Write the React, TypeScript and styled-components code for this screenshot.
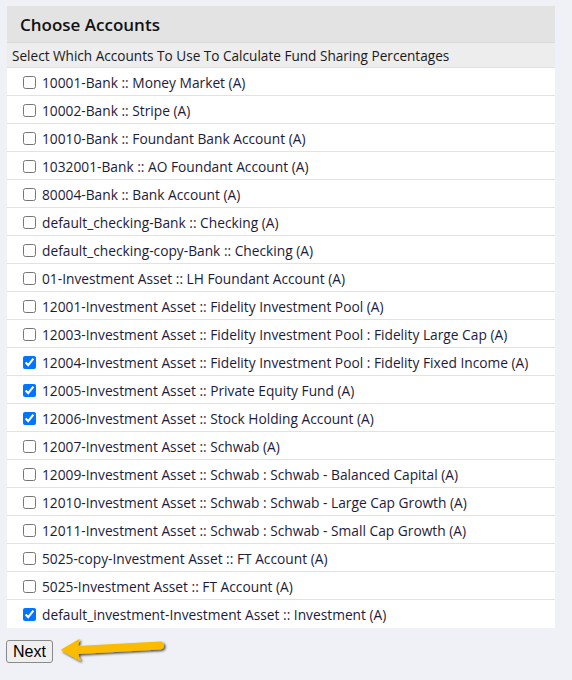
import * as React from 'react';
import styled, { createGlobalStyle } from 'styled-components';

const GlobalStyle = createGlobalStyle`
  body {
    margin: 0;
    background: #f0f1f6;
    font-family: "Open Sans", "Noto Sans", sans-serif;
    color: #1d1b3b;
  }
`;

const Page = styled.div`
  padding: 6px 17px 0 7px;
`;

const Panel = styled.div`
  width: 548px;
  background: #fff;
`;

const Header = styled.div`
  height: 36px;
  background: #e3e3e3;
  display: flex;
  align-items: center;
  padding-left: 13px;
  font-size: 17px;
  font-weight: 600;
  color: #111;
  border-bottom: 1px solid #d9d9d9;
`;

const SubHeader = styled.div`
  height: 24px;
  background: #ededed;
  display: flex;
  align-items: center;
  padding-left: 5px;
  font-size: 13.6px;
  color: #1a1a1a;
  border-bottom: 1px solid #e0e0e0;
`;

const Row = styled.label`
  box-sizing: border-box;
  height: 28px;
  padding-top: 1px;
  display: flex;
  align-items: center;
  padding-left: 13px;
  font-size: 13.75px;
  border-bottom: 1px solid #e2e2e2;
  &:last-child {
    border-bottom: none;
  }
`;

const Box = styled.input`
  width: 13px;
  height: 13px;
  margin: 0 6px 0 3px;
  accent-color: #0075ff;
`;

const Footer = styled.div`
  display: flex;
  align-items: flex-start;
  padding: 12px 0 0 0;
  margin-left: -1px;
`;

const NextButton = styled.button`
  font-family: "Liberation Sans", Arial, sans-serif;
  font-size: 16px;
  color: #000;
  background: #efefef;
  border: 1px solid #8a8a8a;
  border-radius: 3px;
  height: 23px;
  padding: 0 6px;
`;

const ArrowSvg = styled.svg`
  margin: -4px 0 0 7px;
`;

const accounts: [string, boolean][] = [
  ['10001-Bank :: Money Market (A)', false],
  ['10002-Bank :: Stripe (A)', false],
  ['10010-Bank :: Foundant Bank Account (A)', false],
  ['1032001-Bank :: AO Foundant Account (A)', false],
  ['80004-Bank :: Bank Account (A)', false],
  ['default_checking-Bank :: Checking (A)', false],
  ['default_checking-copy-Bank :: Checking (A)', false],
  ['01-Investment Asset :: LH Foundant Account (A)', false],
  ['12001-Investment Asset :: Fidelity Investment Pool (A)', false],
  ['12003-Investment Asset :: Fidelity Investment Pool : Fidelity Large Cap (A)', false],
  ['12004-Investment Asset :: Fidelity Investment Pool : Fidelity Fixed Income (A)', true],
  ['12005-Investment Asset :: Private Equity Fund (A)', true],
  ['12006-Investment Asset :: Stock Holding Account (A)', true],
  ['12007-Investment Asset :: Schwab (A)', false],
  ['12009-Investment Asset :: Schwab : Schwab - Balanced Capital (A)', false],
  ['12010-Investment Asset :: Schwab : Schwab - Large Cap Growth (A)', false],
  ['12011-Investment Asset :: Schwab : Schwab - Small Cap Growth (A)', false],
  ['5025-copy-Investment Asset :: FT Account (A)', false],
  ['5025-Investment Asset :: FT Account (A)', false],
  ['default_investment-Investment Asset :: Investment (A)', true],
];

const Arrow = () => (
  <ArrowSvg width="112" height="30" viewBox="0 0 112 30">
    <defs>
      <filter id="sh" x="-10%" y="-30%" width="130%" height="180%">
        <feDropShadow dx="1.5" dy="1.5" stdDeviation="1" floodColor="#000" floodOpacity="0.7" />
      </filter>
    </defs>
    <g filter="url(#sh)" fill="#fbbb00" stroke="#fbbb00">
      <line x1="18" y1="14" x2="100" y2="9.5" strokeWidth="8" strokeLinecap="round" />
      <path d="M2 14 L19 4 Q17 9 18 11 L18 17 Q17 20 20 24 Z" strokeWidth="1.5" strokeLinejoin="round" />
    </g>
  </ArrowSvg>
);

export default function App() {
  const [checked, setChecked] = React.useState(accounts.map(a => a[1]));
  return (
    <Page>
      <GlobalStyle />
      <Panel>
        <Header>Choose Accounts</Header>
        <SubHeader>Select Which Accounts To Use To Calculate Fund Sharing Percentages</SubHeader>
        {accounts.map(([name], i) => (
          <Row key={name}>
            <Box
              type="checkbox"
              checked={checked[i]}
              onChange={() => setChecked(c => c.map((v, j) => (j === i ? !v : v)))}
            />
            {name}
          </Row>
        ))}
      </Panel>
      <Footer>
        <NextButton>Next</NextButton>
        <Arrow />
      </Footer>
    </Page>
  );
}
